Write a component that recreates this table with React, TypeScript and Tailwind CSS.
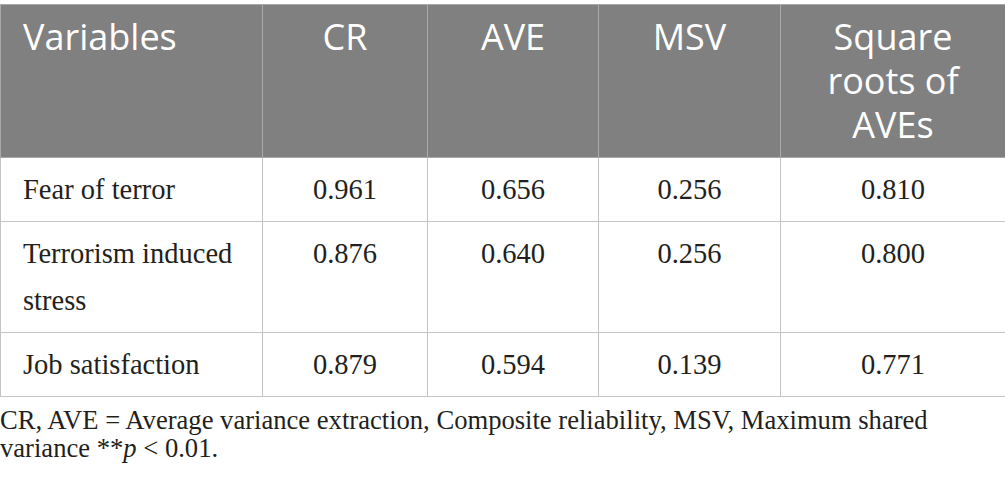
import React from 'react';

const rows = [
  { name: 'Fear of terror', cr: '0.961', ave: '0.656', msv: '0.256', sq: '0.810' },
  { name: 'Terrorism induced stress', cr: '0.876', ave: '0.640', msv: '0.256', sq: '0.800' },
  { name: 'Job satisfaction', cr: '0.879', ave: '0.594', msv: '0.139', sq: '0.771' },
];

const head = "font-['Open_Sans',sans-serif] text-[36px] leading-[44px] text-white font-normal align-top py-[10px] border border-[#a9a9a9]";
const cell = "text-[28.5px] leading-[47px] text-[#231f20] align-top py-[8px] border border-[#c4c4c4]";

const App: React.FC = () => {
  return (
    <div className="w-[1005px] h-[482px] bg-white overflow-hidden font-['Liberation_Serif',serif]">
      <table className="mt-[4px] w-[1005px] border-collapse table-fixed">
        <colgroup>
          <col className="w-[262px]" />
          <col className="w-[165px]" />
          <col className="w-[171px]" />
          <col className="w-[182px]" />
          <col className="w-[225px]" />
        </colgroup>
        <thead>
          <tr className="bg-[#7f807f]">
            <th className={`${head} text-left pl-[22px]`}>Variables</th>
            <th className={`${head} text-center`}>CR</th>
            <th className={`${head} text-center`}>AVE</th>
            <th className={`${head} text-center`}>MSV</th>
            <th className={`${head} text-center px-[40px]`}>Square roots of AVEs</th>
          </tr>
        </thead>
        <tbody>
          {rows.map(r => (
            <tr key={r.name}>
              <td className={`${cell} text-left pl-[22px] pr-[12px]`}>{r.name}</td>
              <td className={`${cell} text-center`}>{r.cr}</td>
              <td className={`${cell} text-center`}>{r.ave}</td>
              <td className={`${cell} text-center`}>{r.msv}</td>
              <td className={`${cell} text-center`}>{r.sq}</td>
            </tr>
          ))}
        </tbody>
      </table>
      <p className="mt-[9px] text-[26.6px] leading-[28px] text-[#231f20] whitespace-nowrap">
        CR, AVE = Average variance extraction, Composite reliability, MSV, Maximum shared
        <br />
        variance **<i>p</i> &lt; 0.01.
      </p>
    </div>
  );
};

export default App;
